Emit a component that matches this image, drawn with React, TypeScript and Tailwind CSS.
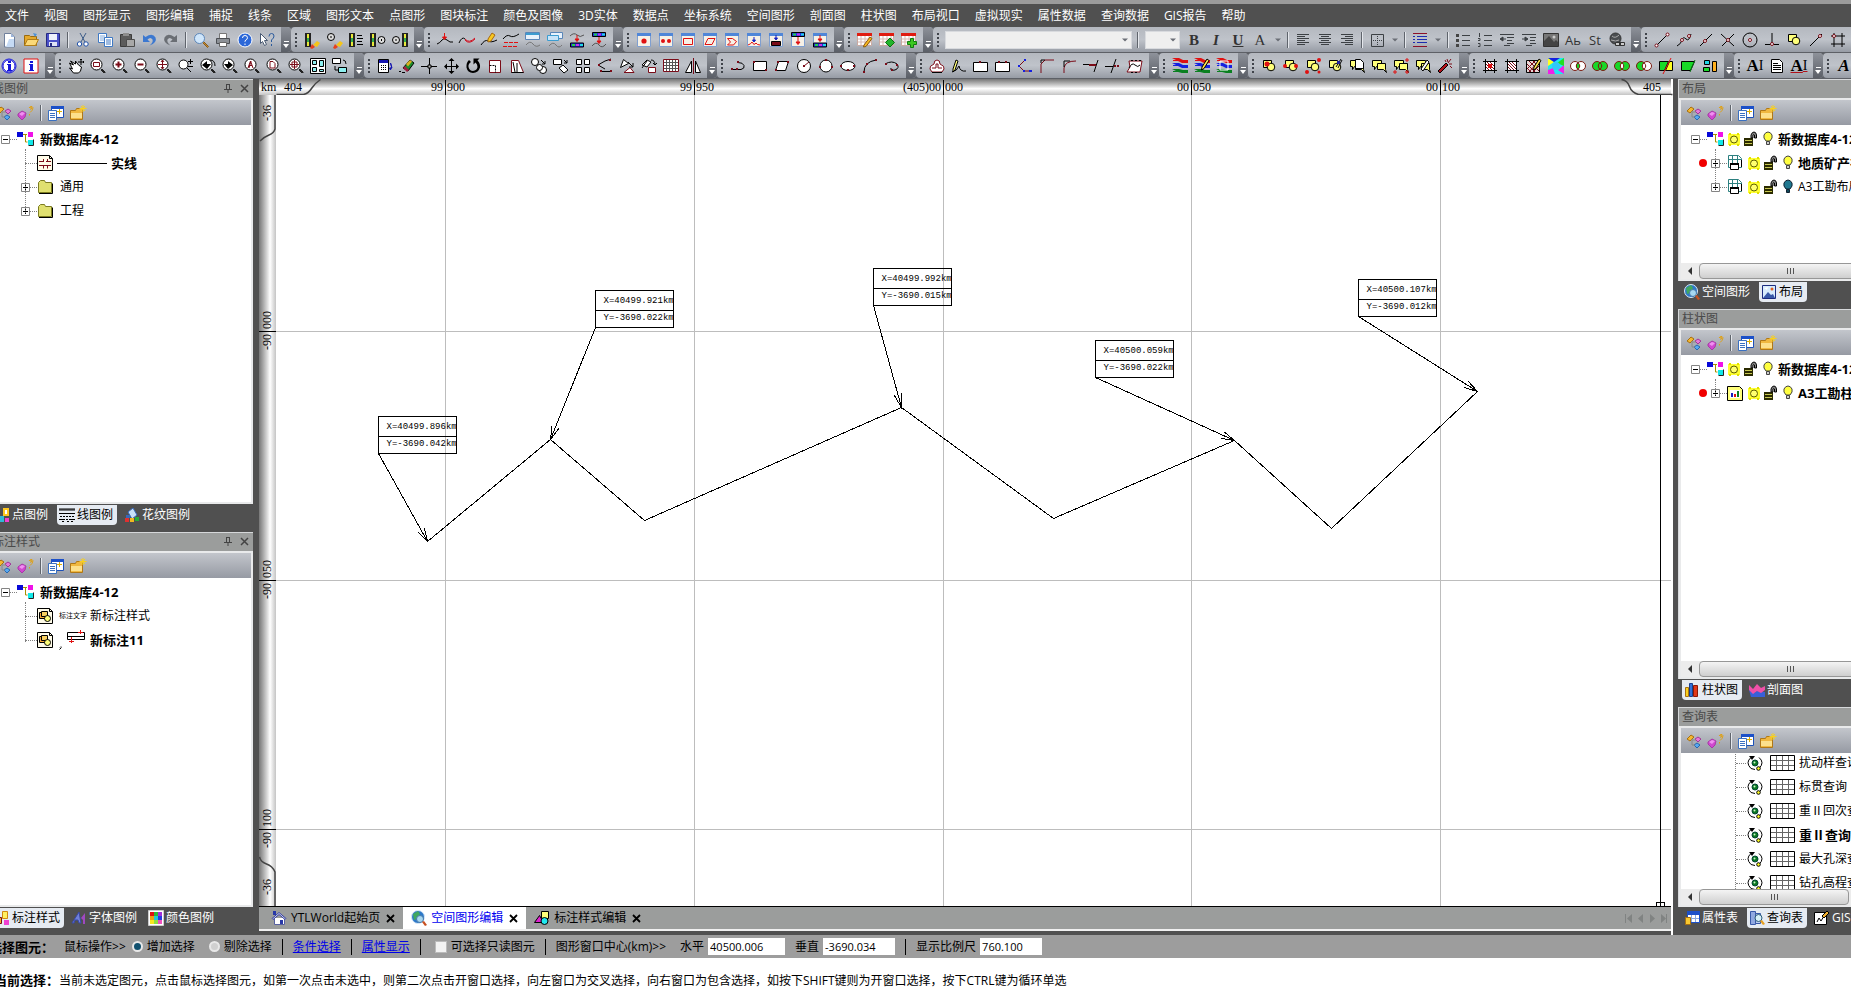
import React from 'react';
import { clsx } from 'clsx';

// fill, stroke, path
type Shape = [string, string, string];

const N = 'none';
const K = '#000';
const R = '#e01010';
const M = '#7a0c18';
const G = '#3c4044';
const Y = '#ffff7a';

const c = (x: number, y: number, r: number) => `M${x - r} ${y}a${r} ${r} 0 1 0 ${2 * r} 0a${r} ${r} 0 1 0 ${-2 * r} 0z`;
const b = (x: number, y: number, w: number, h: number) => `M${x} ${y}h${w}v${h}h${-w}z`;

const lens = (...inner: Shape[]): Shape[] => [
  [N, '#222', 'M11 11l4 4M12 11l3.5 3.5M11 12l3 3'],
  ['#fff', K, c(6.5, 6.5, 5.5)],
  ...inner,
];
const win = (...inner: Shape[]): Shape[] => [
  ['#f7f1e6', '#7f9fd0', b(1.5, 1.5, 13, 13)],
  ['#4f86d8', N, b(1, 1, 14, 3)],
  ...inner,
];
const sheet = (...inner: Shape[]): Shape[] => [
  ['#fff', '#c9a9a0', b(0.5, 2.5, 14, 11)],
  ['#e01c10', N, b(0, 1, 15, 3)],
  [N, '#d8b8b0', 'M4 4v9M8 4v9M12 4v9M1 7h14M1 10h14'],
  ...inner,
];
const column = (x: number): Shape[] => [
  ['#222', N, b(x, 1, 6, 14)],
  ['#e8e83a', N, b(x + 2, 2, 2, 12)],
  ['#35b04a', N, b(x + 2, 6, 2, 4)],
];
const brush = (x: number, y: number): Shape[] => [
  ['#f5c518', N, `M${x} ${y}l4-4 3 2-3 4z`],
  ['#e8401c', N, `M${x - 1} ${y - 1}l3 3-3 2-2-1z`],
];
const band = (y: number): Shape[] => [
  ['#2233dd', K, b(1.5, y, 13, 4)],
  ['#22d04c', N, b(3, y + 1, 3, 2)],
  ['#c832e8', N, b(7, y + 1, 3, 2)],
  ['#20d8e8', N, b(11, y + 1, 3, 2)],
];
const pencil: Shape[] = [['#ffe14a', K, 'M8 9l5-8 2 1.5-5 8-2.5 1.5z']];
const shapesPair: Shape[] = [
  [Y, K, b(2.5, 2.5, 8, 7)],
  [Y, K, c(10, 9, 3.8)],
];
const bubble: Shape[] = [
  [Y, K, 'M1.5 2.5h9v6h-5l-2 3v-3h-2z'],
  [Y, K, 'M6.5 5.5h8v6l1 3-3-3h-6z'],
];
const rainbow: Shape[] = [
  [R, N, 'M0 0h7l4 2h5v3h-6l-4-2h-5v-1h3z'],
  ['#1520e0', N, 'M0 5h7l4 2h5v3h-6l-4-2h-5v-1h3z'],
  ['#0a8020', N, 'M0 11h7l4 1h5v3h-6l-4-1h-5v-1h3z'],
];
const venn = (left: string, right: string, mid: string): Shape[] => [
  [left, '#7a1a10', c(5, 8, 4.5)],
  [right, '#7a1a10', c(11, 8, 4.5)],
  [mid, '#7a1a10', 'M8 4.7q3.5 3.3 0 6.6q-3.5-3.3 0-6.6z'],
];
const hatch: Shape[] = [
  ['#fff', K, b(3.5, 3.5, 9, 9)],
  [N, M, 'M4 9l4 4M4 6l7 7M5 4l8 8M8 4l5 5'],
  [N, K, 'M3.5 1v14M12.5 1v14M1 3.5h14M1 12.5h14'],
];
const page: Shape[] = [['#fffbe8', K, 'M.5 .5h12l3 3v12h-15z'], [N, K, 'M12.5 .5v3h3']];
const dots = (...pts: number[][]): Shape[] => pts.map(([x, y]) => ['#fff', M, c(x, y, 1.5)] as Shape);
const marks = (...pts: number[][]): Shape[] => pts.map(([x, y]) => [M, N, b(x - 1, y - 1, 2, 2)] as Shape);

const icons: Record<string, Shape[]> = {
  newDoc: [['#fff', '#70809c', 'M3.5 1.5h6.5l3.5 3.5v10h-10z'], ['#c5daf4', N, 'M8 7h5v8h-8z'], ['#9db6dc', N, 'M10 1.5v3.5h3.5z']],
  open: [['#e5a92c', '#9a6b10', 'M1.5 3.5h5l1 1h6v9h-12z'], ['#fbd978', '#b07d18', 'M4.5 7.5h11l-3 6h-11z'], ['#4a90d8', N, 'M10 1l4 1-2 3z']],
  save: [['#4a50c8', '#252a80', b(1.5, 1.5, 13, 13)], ['#eef1fb', N, b(4, 2, 8, 6)], ['#dfe3f5', N, b(4, 10, 8, 4)], ['#252a80', N, b(5, 11, 2, 3)]],
  cut: [[N, '#3c5c88', 'M5 1l5 9M11 1l-5 9'], ['#fff', '#1d4fa8', c(4.5, 12, 2.2)], ['#fff', '#1d4fa8', c(11, 12, 2.2)]],
  copy: [['#fff', '#3f79c4', b(1.5, 1.5, 8, 9)], [N, '#7fa8dc', 'M3 4h5M3 6h5M3 8h5'], ['#fff', '#3f79c4', b(7.5, 5.5, 8, 9)], [N, '#3f79c4', 'M9 8h5M9 10h5M9 12h5']],
  paste: [['#5c5c5c', '#3c3c3c', b(1.5, 2.5, 11, 12)], ['#8e8e8e', N, b(4, 1, 6, 3)], ['#a8a8a8', '#4c4c4c', b(7.5, 7.5, 8, 7)]],
  undo: [['#3c78d0', N, 'M2 3v7h7l-2.5-2.5q3-3 5 0q1 3-3 6q8-3 6-8q-3-5-10-.5z']],
  redo: [['#6a6e74', N, 'M14 3v7h-7l2.5-2.5q-3-3-5 0q-1 3 3 6q-8-3-6-8q3-5 10-.5z']],
  find: [['#c08a38', '#8a5c18', 'M9.5 10.5l1-1 5 5-1 1z'], ['#cfe6fb', '#5c86b8', c(6.5, 6.5, 5)]],
  print: [['#fff', '#777', b(4.5, 1.5, 7, 5)], ['#8c9096', '#4c4f54', b(1.5, 6.5, 13, 5)], ['#fff', '#666', b(4.5, 10.5, 7, 4)]],
  help: [['#2c68d8', '#fff', c(8, 8, 7)], [N, '#fff', 'M5.5 6q0-2.5 2.5-2.5t2.5 2.3q0 1.5-2.5 3v1M8 11.5v1.5']],
  whats: [['#fff', '#4a5a72', 'M1.5 1.5l7 7h-3l2 4-2 1-2-4-2 2z'], [N, '#2a5a9c', 'M10 4.5q0-3 2.5-3t2.5 2.5q0 2-2.5 4v2M12.5 12v2']],

  colBrush: [...column(1), ...brush(9, 13)],
  circBrush: [['#ddd', K, c(5, 5, 3.5)], [N, K, 'M5 4v2'], ...brush(10, 13)],
  colText: [...column(1), [N, K, 'M9 3.5h5M9 6.5h6M9 9.5h5M9 12.5h6']],
  colCirc: [...column(0), ['#ddd', K, c(11.5, 8, 3.5)], [N, K, 'M11.5 7v2']],
  circCol: [...column(10), ['#ddd', K, c(4, 8, 3.5)], [N, K, 'M4 7v2']],

  curveAdd: [[N, K, 'M0 12q3-1 5-4t5 0 6 2'], [R, R, 'M7.5 1v6M5.5 5l2 2.5 2-2.5z']],
  curveRed: [[N, K, 'M0 11q3-7 6-4'], [N, '#d01020', 'M6 7q4 5 10-1M6 8q4 5 10-1']],
  curvePen: [[N, K, 'M0 13q4-6 7-4t9-1'], ['#f8c820', '#a86810', 'M7 7l4-6 3 2-4 6-3 1z']],
  curveDash: [[N, K, 'M0 7q4-5 7-3t9-2'], [N, R, 'M1 10.5h4M6 10.5h4M11 10.5h4M0 14.5h4M5 14.5h4M10 14.5h4']],
  curveWin: [['#e8f2fc', '#5a86b8', b(0.5, 0.5, 14, 7)], ['#3c9cd0', N, b(1, 1, 13, 2)], [N, '#777', 'M1 13q4-5 7-1t7 1']],
  curveWin2: [['#e8f2fc', '#5a86b8', b(3.5, 0.5, 12, 6)], ['#c8e4f8', '#3c9cd0', b(0.5, 3.5, 11, 5)], [N, '#777', 'M2 14q4-5 7-1t6 0']],
  curveBand: [[N, '#555', 'M1 4q4-4 7-1t7 0'], ...band(11), [R, R, 'M8 3v6M6 7l2 2.5 2-2.5z']],
  bandCurve: [...band(0.5), [N, '#555', 'M1 14q4-5 7-1t7-1'], [R, R, 'M8 5v5M6 9l2 2.5 2-2.5z']],

  winDot: win([R, N, c(8, 9, 2.6)]),
  winDots: win([R, N, c(5, 9, 2)], [R, N, c(11, 9, 2)]),
  winRect: win([N, R, b(3.5, 6.5, 9, 6)]),
  winPara: win([N, R, 'M6 6.5h7l-3 6h-7z']),
  winPoly: win([N, R, 'M3.5 6.5h5l4 3-3 3.5h-6l3-3z']),
  winCurve: win(['#1520c0', '#1520c0', 'M8 5v4M6.5 8l1.5 2 1.5-2z'], [N, R, 'M2 13q3-1 4-3 2 4 4 1 1 2 4 2']),
  winStamp: win(['#1520c0', '#1520c0', 'M8 3v4M6.5 6l1.5 2 1.5-2z'], [M, K, b(3.5, 9.5, 9, 4)]),
  winBand: win(...band(0.5), [R, R, 'M8 5v6M6 10l2 2.5 2-2.5z']),
  winBand2: win(...band(11), [R, R, 'M8 3v5M6 7l2 2.5 2-2.5z']),

  sheetPen: sheet(['#f8b820', '#8a5a10', 'M7 13l6-8 2 1.5-6 8-2.5.5z']),
  sheetGem: sheet(['#22b42c', '#0a7014', 'M11 6l4.5 4.5-4.5 4.5-4.5-4.5z']),
  sheetAdd: sheet(['#3cc820', '#0f7c10', 'M9.5 6.5h3v3h3v3h-3v3h-3v-3h-3v-3h3z']),

  left: [[N, G, 'M2 2.5h12M2 4.5h8M2 6.5h12M2 8.5h8M2 10.5h12M2 12.5h8']],
  center: [[N, G, 'M2 2.5h12M4 4.5h8M2 6.5h12M4 8.5h8M2 10.5h12M4 12.5h8']],
  right: [[N, G, 'M2 2.5h12M6 4.5h8M2 6.5h12M6 8.5h8M2 10.5h12M6 12.5h8']],
  border: [[N, G, b(2.5, 2.5, 12, 12)], [N, G, 'M8.5 4v1M8.5 6v1M8.5 8v1M8.5 10v1M8.5 12v1M4 8.5h1M6 8.5h1M10 8.5h1M12 8.5h1']],
  spacing: [[N, '#8c1028', 'M1 1.5h14M1 14.5h14'], [N, '#1c2cb0', 'M5 4.5h10M5 7.5h10M5 10.5h10M1 4.5h2M1 7.5h2M1 10.5h2']],
  bullets: [['#444', N, b(1, 2, 3, 3) + b(1, 7, 3, 3) + b(1, 12, 3, 3)], [N, G, 'M7 3.5h8M7 8.5h8M7 13.5h8']],
  numbers: [[N, G, 'M2.5 1v4M1 6.5h2v2h-2M1 11.5h2v3h-2M7 3.5h8M7 8.5h8M7 13.5h8']],
  outdent: [[N, G, 'M1 2.5h14M8 5.5h7M8 8.5h5M8 11.5h7M5 13.5h6'], [G, G, 'M7 7h-5M4 5l-3 2 3 2z']],
  indent: [[N, G, 'M1 2.5h14M9 5.5h6M9 8.5h5M9 11.5h6M5 13.5h6'], [G, G, 'M1 7h5M4 5l3 2-3 2z']],
  image: [['#777', '#333', b(0.5, 1.5, 15, 13)], ['#444', N, 'M1 14v-5l5-5 5 6 2-2 2 2v4z'], ['#ccc', N, c(11, 5, 1.5)]],
  world: [['#4a4d50', '#333', c(6.5, 6.5, 5.5)], [N, '#aaa', 'M3 4q3 3 7-1M2 8q5 2 8 0'], ['#ccc', '#333', b(6.5, 10.5, 5, 3) + b(10.5, 10.5, 5, 3)]],

  snapLine: [[N, K, 'M3 13L13 3'], ...dots([2.5, 13.5], [13.5, 2.5])],
  snapCurve: [[N, K, 'M1 14q4-2 5-6t4-1 5-5'], ...dots([6, 8], [13, 4])],
  snapMid: [[N, K, 'M2 14L14 2'], ...dots([7, 9])],
  snapCross: [[N, K, 'M1 2l13 12M14 2L2 14'], ...dots([8, 8])],
  snapCircle: [[N, K, c(8, 8, 7)], ...dots([8, 8])],
  snapPerp: [[N, K, 'M8 1v11M1 12.5h14'], ...dots([8, 12])],
  snapShape: shapesPair,
  snapNear: [[N, K, 'M2 14L14 2'], ...dots([12, 4])],
  snapGrid: [[N, K, 'M4 1v14M12 1v14M1 4h14M1 12h14'], ...dots([4, 4])],

  infoBlue: [['#fff', '#1414d8', c(8, 8, 7)], [N, '#1414d8', c(8, 8, 6)], ['#1414d8', N, 'M6 6h4v6h1v1h-5v-1h1v-5h-1zM7 3h3v2h-3z']],
  infoRed: [['#fff', R, b(1, 1, 14, 14)], ['#1414d8', N, 'M6 6h4v6h1v1h-5v-1h1v-5h-1zM7 3h3v2h-3z']],
  hand: [['#fff', K, 'M1.5 5l4 2-3-4 5 3 0-3 3 4 3 2-1 4-2 2h-5l-4-5 3 1z'], [N, K, 'M13 1v6M10 4h6M12 2l1-1 1 1M15 3l1 1-1 1']],
  zRect: lens([N, M, b(3.5, 4.5, 6, 4)]),
  zIn: lens([M, N, 'M5.5 3.5h2v2h2v2h-2v2h-2v-2h-2v-2h2z']),
  zOut: lens([M, N, b(3.5, 5.5, 6, 2)]),
  zAll: lens([N, M, 'M6.5 2v9M2 6.5h9M5 4l1.5-2 1.5 2M5 9l1.5 2 1.5-2']),
  zScale: [['#fff', K, c(5.5, 6.5, 4.5)], [N, K, 'M9 10l4 4M12.5 1v5M10 3.5h5M10 8.5h5']],
  zPrev: lens([K, N, 'M2 7l5-4v3h4l-4 5z'], [N, K, 'M10 2q5 0 5 6']),
  zNext: lens([K, N, 'M11 7l-5-4v3h-4l4 5z']),
  zA: lens([N, M, 'M4 10l2.5-7 2.5 7M5 7.5h3'], [N, M, 'M5 10l2-7']),
  zPage: lens([N, M, 'M4 3.5h3l2 2v4.5h-5z']),
  zPan: lens([N, M, 'M6.5 2v9M2 6.5h9M4 4h5v5h-5z']),
  tiles: [['#fff', K, b(0.5, 0.5, 15, 15)], ['#8ef0f0', K, b(2.5, 2.5, 4, 4) + b(9.5, 2.5, 4, 6)], ['#8ef0f0', K, b(2.5, 9.5, 4, 4) + b(9.5, 11.5, 4, 2)]],
  tileNext: [['#fff', K, b(0.5, 0.5, 8, 5)], ['#8ef0f0', K, b(6.5, 9.5, 8, 5)], [N, K, 'M11 2q3 0 3 4M3 8v4h3']],

  calc: [['#fff', K, b(1.5, 1.5, 10, 13)], ['#1414b0', N, b(2, 2, 9, 3)], [N, K, 'M4 7.5h1M6 7.5h1M8 7.5h1M4 9.5h1M6 9.5h1M8 9.5h1M4 11.5h1M6 11.5h1M8 11.5h1'], ['#1414b0', '#1414b0', 'M13.5 5q2 4 0 7l-1-2h2.5z']],
  erase: [['#1c8c2c', K, 'M4 10l7-8 4 3-6 8z'], ['#d8b020', N, 'M7 6l4-4 2 1.5-4 5z'], ['#a02040', N, 'M4 10l2-2 4 4-2 2z'], [N, K, 'M0 13.5h2M3 14.5h3']],
  cross: [[N, K, 'M8.5 0v16M0 8.5h16'], ['#bbb', K, b(7, 7, 3, 3)]],
  move: [[N, K, 'M8.5 1v14M2 8.5h13'], [K, N, 'M8.5 0l3 3h-6zM8.5 16l3-3h-6zM1 8.5l3-3v6zM16 8.5l-3-3v6z']],
  rotate: [[K, N, 'M4 2l2 2q-3 2-2.500 5 1 4 4.500 4 4-.5 4.500-4 0-3-2-4.500l-2 2v-6h6l-2 2q3 3 2.500 7-1.500 5-7 5.500-5.500-.5-6.500-5.500-.5-5 2.500-7.500z']],
  scale: [['#fff', M, b(2.5, 2.5, 11, 12)], [N, K, 'M2.5 7.5h2M5.5 7.5h2M8.5 7.5v2M8.5 10.5v2M8.5 13.5v1']],
  skew: [['#fff', M, 'M2.5 2.5h7l5 12h-12z'], [N, K, 'M4 4l2 10M2.5 14.5h12M8 5v9']],
  copyCirc: [['#fff', K, c(4, 4, 3.5)], ['#fff', K, c(12, 12, 3.5)], ['#fff', K, c(8.5, 9.5, 3)], [N, K, 'M10 2l4 4M14 3v3h-3']],
  copySq: [['#fff', K, b(0.5, 1.5, 8, 5)], ['#fff', K, 'M6 10l4-3 5 5-4 3z'], [N, K, 'M11 2l3 3M14 2v3h-3']],
  array: [['#fff', K, b(1.5, 1.5, 5, 5) + b(9.5, 1.5, 5, 5) + b(1.5, 9.5, 5, 5) + b(9.5, 9.5, 5, 5)]],
  align1: [[N, K, 'M1 7l7-4 6-2M1 7l7 4M4 13.5h10'], ...marks([2, 7], [13, 2], [4, 13], [14, 13])],
  align2: [['#fff', K, 'M1.5 9.5l3-8 5 4z'], ['#fff', M, 'M5 14.5h10l-4-5z'], [N, K, 'M9 4l5 5M14 5v4h-4']],
  align3: [['#fff', K, 'M1 7l5-5 4 2-4 5z'], ['#fff', M, b(7.5, 9.5, 7, 5)], [N, K, 'M10 2q4 0 4 5M12 5l2 2 2-2M1 10l5-7']],
  grid: [['#fff', M, b(0.5, 1.5, 15, 12)], [N, '#555', 'M3.5 2v11M6.5 2v11M9.5 2v11M12.5 2v11M1 4.5h14M1 7.5h14M1 10.5h14']],
  mirror: [['#fff', K, 'M6.5 3v11.5h-6z'], ['#fff', K, 'M10.5 3v11.5h5z'], [N, M, 'M8.5 0v16']],

  pline: [[N, K, 'M1 11.5h10q4-1 3-4-1-3-6-3'], ...marks([2, 11], [7, 11], [8, 4])],
  rect: [['#fff', K, b(1.5, 3.5, 13, 9)], ...marks([2, 4], [14, 12])],
  para: [['#fff', K, 'M4.5 3.5h10l-3 9h-10z'], ...marks([4, 4], [14, 4], [2, 12])],
  circ: [['#fff', K, c(8, 8, 6.5)], [N, M, 'M8 8l5-4'], ...marks([8, 8])],
  circ3: [['#fff', K, c(8, 8, 6)], ...marks([8, 2], [2, 9], [14, 9])],
  ellipse: [['#fff', K, 'M1 8a7 4.5 0 1 0 14 0a7 4.5 0 1 0-14 0z'], ...marks([1, 8], [14, 8], [8, 12])],
  arc: [[N, K, 'M2 14q0-10 12-12'], ...marks([2, 14], [14, 2], [5, 6])],
  spiral: [[N, K, 'M1 6q7-4 12 0 3 4-2 6-5 1-4-2'], ...marks([2, 6], [13, 7], [8, 12])],

  stamp: [['#fff', M, 'M5 6q0-4 3-4t3 4q5 2 4 5l-2 3h-10l-2-3q-1-3 4-5z'], [N, M, 'M3 10h4v-4h2v4h4'], [N, K, 'M3 14.5h10']],
  penCurve: [[Y, K, 'M2 11l3-9 2 1-3 9-2 2z'], [N, K, 'M1 14q5-1 7-6 1 6 7 5']],
  node: [['#fff', K, b(0.5, 4.5, 14, 9)], ...marks([7, 4])],
  nodes: [['#fff', K, b(0.5, 4.5, 14, 9)], ...marks([4, 4], [11, 4])],
  nodeBlue: [[N, M, 'M8 2L2 8l5 5h6'], ['#1520e0', N, b(7, 1, 2, 2) + b(1, 7, 2, 2) + b(6, 12, 2, 2) + b(12, 12, 3, 2)]],
  chamfer: [[N, M, 'M2 15v-9l4-4h9'], [N, K, 'M2 5v-3h4']],
  fillet: [[N, M, 'M3 15v-5q1-7 12-7'], [N, K, 'M3 9v-6h6']],
  extend: [[N, K, 'M0 6.5h6M15 2l-4 12'], [N, M, 'M6 6.5h7M6 7.5h7']],
  trim: [[N, K, 'M0 8.5h8M11 1L6 15'], [N, M, 'M9 8.5h2M12 8.5h2M9 7.5h2M12 7.5h2']],
  region: [['#fff', M, 'M2 3h13l-2 11h-13l3-5z'], [N, K, 'M2 10q3-6 6-3t5 0M4 14.5h2M8 14.5h2M4 2.5h2M8 2.5h2M12 2.5h2']],

  rb1: rainbow,
  rb2: [...rainbow, ...pencil],
  rb3: [...rainbow, [N, '#fff', b(4, 3, 8, 9)]],

  or1: [...shapesPair, [R, N, c(6, 6, 2.5)]],
  or2: [...shapesPair, [R, N, c(2, 8, 2) + c(13, 8, 2)]],
  or3: [...shapesPair, [R, N, c(2, 14, 2) + c(14, 2, 2) + c(14, 14, 1.5)]],
  or4: [...shapesPair, [N, K, 'M9 9l5-8M11 10l4-8'], ['#2020a0', N, b(10, 3, 3, 3)]],
  bub1: [...bubble, ['#fff', K, 'M6.5 1.5h5l3 3v6h-8z']],
  bub2: bubble,
  bub4: [...bubble, [N, R, 'M2 12v4M0 14h4M14 0v4M12 2h4M14 12v4M12 14h4']],
  bub5: [...bubble, ['#fff', K, 'M6 11l6-9 2 2-6 9z']],
  wand: [['#b01018', K, 'M1 13l8-8 2 2-8 8z'], [N, M, 'M10 1l1 3M14 1l-3 4M15 6h-3M13 8l2 2M8 2l1 2']],

  ht1: [...hatch, [R, N, b(6, 6, 4, 4)]],
  ht2: hatch,
  ht3: [['#e8d8d8', K, b(0.5, 2.5, 13, 12)], [N, M, 'M1 6l8 8M1 10l4 4M3 3l10 10M7 3l6 6M9 3l-8 8M13 3L3 14M13 8l-6 6'], ...pencil],
  prism: [['#20e8f0', N, b(0, 0, 16, 16)], ['#ffff20', N, 'M0 0l6 4-6 4z'], ['#f020e8', N, 'M16 16l-6-4 6-5z'], ['#20e020', N, 'M16 0l-7 5 7 3z'], ['#1520e0', N, 'M0 0h12l-6 4z'], ['#f020e8', N, 'M0 16v-4l5-2 2 6z'], ['#30c8f8', N, c(8, 8, 4)]],
  v1: venn('#fff', '#fff', '#18d828'),
  v2: venn('#18d828', '#18d828', '#18d828'),
  v3: venn('#18d828', '#18d828', '#fff'),
  v4: venn('#18d828', '#fff', '#fff'),
  split: [['#18d828', K, 'M1.5 3.5h9l-4 9h-5z'], ['#ffff20', K, 'M11.5 3.5h3v9h-7z'], [N, R, 'M13 0L5 16']],
  quad: [['#18d828', K, 'M1.5 3.5h13l-4 9h-9z'], [N, '#0a7014', 'M15 2l-5 12']],
  blocks: [['#20d8e8', K, b(2.5, 2.5, 5, 4)], ['#18d828', K, b(1.5, 9.5, 6, 4)], ['#ffb020', K, b(10.5, 3.5, 4, 10)]],

  docText: [['#fff', K, 'M2.5 1.5h8l3 3v10h-11z'], [N, K, 'M4 5.5h5M4 7.5h8M4 9.5h8M4 11.5h8']],

  treeQ: [['#f4b830', '#a87010', 'M1 6l4-4 3 2-4 4z'], ['#e878d8', '#a03898', 'M9 6l3-2 3 2-3 3z'], ['#58a8f0', '#2868b0', 'M8 12l3-2 3 2-3 3z'], [N, '#888', 'M6 6v6h3M6 7h4']],
  gem: [['#d048d0', '#a838a8', 'M0 9l4-3 4 2-1 4-3 3-4-4z'], ['#f090f0', N, 'M1 9l3-2 3 1-3 3z'], [N, '#e0a010', 'M11 3q1-2 3-1.5t0 4l-2 2M11.5 9v1.5M12 3q1-1 2 0M12 4.500q1-1 2-1']],
  winAdd: [['#fff', '#1c50b8', b(3.5, 1.5, 12, 11)], ['#1c50c8', N, b(3, 1, 13, 3)], ['#fff', '#3a70c0', b(0.5, 5.5, 8, 10)], [N, '#3a70c0', 'M2 8.5h5M2 10.5h5M2 12.5h5'], [N, '#e0b000', 'M11.5 4v5M9 6.5h5']],
  folderNew: [['#f0b840', '#b07818', 'M.5 5.5h5l1-2h6v11h-12z'], ['#fce08c', N, b(1, 8, 11, 5)], [N, '#f8d020', 'M13 0v7M9.5 3.5h7M11 1l4 5M15 1l-4 5']],

  db: [['#0808d8', N, b(0, 1, 6, 5)], ['#f010e8', N, b(11, 1, 5, 5)], ['#10e8e8', N, b(11, 9, 5, 5)], [N, '#a89000', 'M6 3.5h4M8.5 4v7h2'], [N, '#222', 'M11.5 14.5h5v-6']],
  lineDoc: [...page, [N, M, 'M2 6.5h4M9 6.5h5M2 10.5h12M6.5 4v3M10.5 4v3M6.5 10.5v3M10.5 10.5v3']],
  folder: [['#e0e070', '#7c7c20', 'M1.5 3.5l2-2h4l1 2h6v10h-13z'], [N, K, 'M2 14.5h13.5v-10']],
  markDoc: [...page, ['#f8a838', K, b(2.5, 4.5, 6, 6)], ['#f8d060', K, b(4.5, 3.5, 6, 5)], [Y, K, c(10.5, 10.5, 3)]],
  layout: [['#fff', '#2c8080', 'M1.5 .5h10l3 3v9h-13z'], [N, '#2c8080', 'M5.5 1v12M2 4.5h12M10.5 1v10'], ['#fff', K, b(3.5, 8.5, 8, 6)], [K, N, b(3, 8, 9, 2)], [N, K, 'M14.5 5v7']],
  chartDoc: [[Y, K, 'M.5 1.5h12l3 3v11h-15z'], ['#fff', N, b(3, 5, 10, 8)], ['#1520c0', N, b(4, 8, 2, 4)], [R, N, b(7, 9, 2, 3)], ['#0a8020', N, b(10, 6, 2, 6)]],
  sun: [['#ffff30', N, b(2, 3, 12, 11)], ['#ffff70', '#5c5c00', c(8, 8.5, 3.5)], ['#e0e000', N, b(3, 2, 2, 2) + b(11, 2, 2, 2) + b(3, 13, 2, 2) + b(11, 13, 2, 2)]],
  lock: [['#2a2a00', N, b(1, 7, 9, 8)], [N, '#c8c850', 'M2 9.5h7M2 12.5h7'], ['#888', K, 'M8 7v-3q1-3 3-3t2.5 3v3h-2v-3q-.5-1-1.500 0v3z']],
  bulb: [['#ffff40', '#444', 'M6 10q-3-3-2-6 1.5-3 4-3t4 3q1 3-2 6z'], ['#ccc', '#444', b(6.5, 10.5, 3, 3)]],
  bulbOff: [['#207890', '#123', 'M6 10q-3-3-2-6 1.5-3 4-3t4 3q1 3-2 6z'], ['#104858', '#123', b(6.5, 10.5, 3, 3)]],
  eye: [['#fff', N, 'M2 8a6 6 0 1 0 12 0a6 6 0 1 0-12 0z'], [N, K, 'M4 2.5q-6 5 0 11M12 2.500q6 5 0 11M4 13.500l4 1'], ['#0a7820', '#043', c(8, 8, 3)], [K, N, 'M2 1h6l-3 4z'], ['#ffff20', K, c(11.5, 13.5, 1.8)], ['#c8f8c8', N, c(7.5, 7.5, 1)]],

  tPoint: [['#30b8d8', N, b(4, 9, 6, 6)], ['#ffc820', N, b(9, 1, 6, 8)], ['#fff', N, b(11, 3, 2, 4)], ['#f040d0', N, b(11, 11, 4, 4)]],
  tLine: [[N, K, 'M0 2h16M0 3h16M0 6.5h16M1 9.5h2M4 9.5h2M7 9.5h2M10 9.5h2M13 9.5h2M0 12.5h6M10 12.5h6M7 12.5h2M3 14.5h2M8 14.5h2M12 14.5h2']],
  tPattern: [['#c8e0f8', '#3868b8', 'M4 5l5-4 4 7-5 4z'], ['#3868b8', N, b(2, 8, 4, 3)], ['#e03030', N, b(1, 11, 4, 4)], ['#f0b820', N, b(6, 11, 4, 4)], ['#28a838', N, b(11, 10, 4, 4)]],
  tMark: [['#f8b020', M, b(1.5, 7.5, 6, 6)], ['#fff060', '#d08810', b(8.5, 1.5, 5, 7)], ['#f040d0', N, b(10, 10, 5, 5)]],
  tFont: [['#7080d8', '#3848a8', 'M1 13l7-11 2 11h-2l-1-3h-3l-1 3z'], ['#a048c0', N, 'M10 8l4-5v11h-2v-4z']],
  tColor: [['#fff', '#ccc', b(0.5, 0.5, 15, 15)], [R, N, b(2, 2, 4, 4)], ['#f0a010', N, b(2, 6, 4, 4)], ['#f8e820', N, b(2, 10, 4, 4)], ['#28b838', N, b(6, 2, 4, 4)], ['#20c8d8', N, b(6, 6, 4, 4)], ['#90e040', N, b(6, 10, 4, 4)], ['#a030d8', N, b(10, 2, 4, 4)], ['#2838e0', N, b(10, 6, 4, 4)], ['#f050c0', N, b(10, 10, 4, 4)]],
  tGlobe: [['#2c78c8', '#d8e8f8', c(7, 7, 6.5)], ['#40a860', N, 'M2 4l5-3 2 3-3 5-3 1z'], ['#a8d8f0', '#4878a8', c(9, 9, 3.5)], ['#c85020', N, 'M11 12l2-1 3 4-2 1z']],
  tImage: [['#d8ecfc', '#1c2c80', b(1.5, 1.5, 13, 13)], ['#3858a8', N, 'M2 14l5-6 3 3 2-1 2 4z'], ['#e06020', N, c(11, 5, 1.5)], ['#fff', N, 'M3 4l4-1-1 3z']],
  tBars: [['#f8d020', '#a87010', b(1.5, 5.5, 3, 9)], ['#3070d8', '#18408c', b(5.5, 1.5, 3, 13)], ['#e03818', '#8c1808', b(9.5, 3.5, 4, 11)]],
  tArea: [['#3860d8', N, 'M0 8l5 3 3-2 8 1v5h-14z'], ['#f050a8', N, 'M0 3l4 4 4-5 4 4 4-2v4l-4 3-4-2-4 3-4-4z']],
  tTable: [['#fff', '#1c50c8', b(3.5, 1.5, 12, 11)], ['#1c50c8', N, b(3, 1, 13, 4)], [N, '#88a8e0', 'M7.5 5v7M11.5 5v7M4 8.5h11'], ['#f8c830', '#a87010', b(1.5, 7.5, 5, 7)]],
  tQuery: [['#90a8e0', '#3858a8', b(1.5, 1.5, 5, 13)], ['#c0d0f0', '#3858a8', b(6.5, 3.5, 5, 10)], ['#d8f0f8', '#285878', c(9.5, 8, 3.5)], ['#e8a020', N, 'M11 11l2-1 3 4-2 1z']],
  tReport: [['#fff', K, b(0.5, 2.5, 12, 12)], [N, K, 'M3 12l2-4 2 3 3-5'], ['#f0b030', K, 'M8 6l5-5 2 2-5 5z']],
  tHome: [['#fff', '#5860a0', 'M3.5 8v6.5h10v-6.5'], ['#d0d8f0', '#3840a0', 'M1 8.5l7-6 7 6-1 1-6-5-6 5z'], ['#2838a8', N, b(9, 10, 3, 4)], ['#2838a8', N, b(2, 1, 3, 4)]],
  tEdit: [['#e020d0', K, 'M.5 12.5l5-7 4 7z'], [Y, K, b(7.5, 1.5, 7, 7)], ['#20e8f0', K, c(10.5, 11, 3.5)]],
};

const Glyph = ({ name, className = 'h-4 w-4' }: { name: string; className?: string }) => (
  <svg viewBox="0 0 16 16" className={clsx('shrink-0 overflow-visible', className)} aria-hidden="true">
    {(icons[name] || []).map(([fill, stroke, d], i) => (
      <path key={i} d={d} fill={fill} stroke={stroke} />
    ))}
  </svg>
);

const menus = [
  '文件', '视图', '图形显示', '图形编辑', '捕捉', '线条', '区域', '图形文本', '点图形', '图块标注', '颜色及图像', '3D实体',
  '数据点', '坐标系统', '空间图形', '剖面图', '柱状图', '布局视口', '虚拟现实', '属性数据', '查询数据', 'GIS报告', '帮助',
];

const Divider = () => (
  <span className="flex w-2 shrink-0 justify-center">
    <span className="h-4 w-px bg-[#5f646c]" />
    <span className="h-4 w-px bg-[#e4e7ec]" />
  </span>
);

const Tool = ({ name }: { name: string }) => (
  <button type="button" aria-label={name} className="flex h-full w-[22px] shrink-0 items-center justify-center">
    <Glyph name={name} />
  </button>
);

const DropArrow = () => (
  <button type="button" aria-label="drop" className="flex w-[13px] shrink-0 justify-center">
    <svg viewBox="0 0 8 4" className="h-1 w-1.5"><path d="M0 0h8l-4 4z" fill="#6a6e76" /></svg>
  </button>
);

const ToolGroup = ({ items, grip = true, children }: { items?: string[]; grip?: boolean; children?: React.ReactNode }) => (
  <div className="flex h-[25px] shrink-0 items-center rounded-sm bg-linear-to-b from-[#b4b8bf] via-[#bfc3ca] to-[#979ca5]">
    {grip && (
      <span className="flex w-[10px] shrink-0 flex-col items-center gap-0.5">
        {[0, 1, 2, 3].map((i) => <span key={i} className="h-0.5 w-0.5 bg-[#3f434a]" />)}
      </span>
    )}
    {items?.map((item, i) => (item === '|' ? <Divider key={i} /> : <Tool key={i} name={item} />))}
    {children}
    <span className="flex h-full w-[13px] shrink-0 justify-end">
      <button type="button" aria-label="more" className="flex h-full w-[10px] items-end justify-center rounded-r-sm bg-linear-to-b from-[#8e929a] to-[#5b5f67] pb-1">
        <svg viewBox="0 0 6 7" className="h-[7px] w-1.5"><path d="M1 0h5v1h-5zM0 3h6l-3 4z" fill="#fff" /></svg>
      </button>
    </span>
  </div>
);

const letterTool = 'flex w-[22px] shrink-0 items-center justify-center font-["Liberation_Serif",serif] text-[15px] leading-4 text-[#333]';
const bigA = 'flex w-[22px] shrink-0 items-center justify-center font-["Liberation_Serif",serif] text-[17px] leading-4 font-bold text-black';

const FormatGroup = () => (
  <ToolGroup>
    <span className="pl-0.5" />
    <select aria-label="font" className="h-[18px] w-[187px] shrink-0 appearance-none border border-[#d8dade] bg-[#efefef]" />
    <span className="pointer-events-none -ml-3.5"><DropArrow /></span>
    <span className="flex w-3.5 justify-center"><Divider /></span>
    <select aria-label="size" className="h-[18px] w-[35px] shrink-0 appearance-none border border-[#d8dade] bg-[#efefef]" />
    <span className="pointer-events-none -ml-3.5 mr-1"><DropArrow /></span>
    <button type="button" className={clsx(letterTool, 'font-bold')}>B</button>
    <button type="button" className={clsx(letterTool, 'font-bold italic')}>I</button>
    <button type="button" className={clsx(letterTool, 'font-bold underline')}>U</button>
    <button type="button" className={letterTool}>A</button>
    <DropArrow />
    <Divider />
    <Tool name="left" /><Tool name="center" /><Tool name="right" />
    <Divider />
    <Tool name="border" /><DropArrow />
    <Divider />
    <Tool name="spacing" /><DropArrow />
    <Divider />
    <Tool name="bullets" /><Tool name="numbers" /><Tool name="outdent" /><Tool name="indent" /><Tool name="image" />
    <button type="button" className="w-[22px] shrink-0 text-[13px] leading-4 text-[#333]">Aь</button>
    <button type="button" className="w-[22px] shrink-0 text-[13px] leading-4 text-[#333]">St</button>
    <Tool name="world" />
  </ToolGroup>
);

const PanelTabs = ({ tabs }: { tabs: { icon: string; label: string; active?: boolean }[] }) => (
  <div className="flex h-7 shrink-0 items-start gap-[5px] bg-[#505050] pt-px pl-1">
    {tabs.map((t) => (
      <button
        key={t.label}
        type="button"
        className={clsx(
          'flex h-5 shrink-0 items-center gap-0.5 rounded-b-sm pr-1 pl-0.5 whitespace-nowrap',
          t.active ? 'bg-[#e6ebf2] text-black' : 'text-white',
        )}
      >
        <Glyph name={t.icon} />
        {t.label}
      </button>
    ))}
  </div>
);

const Scroll = ({ thumb }: { thumb: string }) => (
  <div className="flex h-4 shrink-0 bg-[#ececec]">
    <button type="button" aria-label="scroll left" className="flex w-[18px] shrink-0 items-center justify-center">
      <svg viewBox="0 0 4 8" className="h-2 w-1"><path d="M4 0v8l-4-4z" fill="#333" /></svg>
    </button>
    <div className={clsx('flex items-center justify-center gap-0.5 rounded-sm border border-[#979797] bg-linear-to-b from-[#f4f4f4] to-[#cfcfcf]', thumb)}>
      {[0, 1, 2].map((i) => <span key={i} className="h-1.5 w-px bg-[#555]" />)}
    </div>
  </div>
);

interface PanelProps {
  title: string;
  grow: string;
  tabs: { icon: string; label: string; active?: boolean }[];
  scroll?: string;
  children: React.ReactNode;
}

const Panel = ({ title, grow, tabs, scroll, children }: PanelProps) => (
  <section className={clsx('flex min-h-0 flex-col', grow)}>
    <div className="flex min-h-0 flex-1 flex-col border-t border-l border-[#d6d8da] bg-[#9b9d9c]">
      <header className="flex h-[18px] shrink-0 items-center gap-2 pr-1 pb-px pl-[3px] text-[#4a4a4a]">
        <h2 className="flex-1">{title}</h2>
        <button type="button" aria-label="pin">
          <svg viewBox="0 0 8 9" className="h-[9px] w-2" fill="none" stroke="#444"><path d="M2.5 0v5M5.5 0v5M2 .5h4M0 5.5h8M4 6v3M5.5 1v4" /></svg>
        </button>
        <button type="button" aria-label="close">
          <svg viewBox="0 0 9 9" className="h-[9px] w-[9px]" fill="none" stroke="#444" strokeWidth="1.5"><path d="M1 1l7 7M8 1l-7 7" /></svg>
        </button>
      </header>
      <div className="flex min-h-0 flex-1 flex-col border-2 border-[#e9eaeb]">
        <div className="flex h-[25px] shrink-0 items-center bg-linear-to-b from-[#c3c6cc] to-[#969aa3] pl-0.5">
          <Tool name="treeQ" /><Tool name="gem" />
          <Divider />
          <Tool name="winAdd" /><Tool name="folderNew" />
        </div>
        <div className="relative min-h-0 flex-1 overflow-hidden bg-white">{children}</div>
        {scroll && <Scroll thumb={scroll} />}
      </div>
    </div>
    <PanelTabs tabs={tabs} />
  </section>
);

const Toggle = ({ open }: { open?: boolean }) => (
  <button type="button" aria-label="toggle" className="flex shrink-0">
    <svg viewBox="0 0 9 9" className="h-[9px] w-[9px]" fill="#fff" stroke="#848484">
      <path d="M.5 .5h8v8h-8z" />
      <path d={open ? 'M2 4.5h5' : 'M2 4.5h5M4.5 2v5'} stroke="#000" />
    </svg>
  </button>
);

const Guide = ({ className }: { className: string }) => <span className={clsx('shrink-0 border-t border-dotted border-[#808080]', className)} />;

const States = ({ off }: { off?: boolean }) => (
  <span className="ml-[3px] flex shrink-0 gap-px">
    <Glyph name="sun" /><Glyph name="lock" /><Glyph name={off ? 'bulbOff' : 'bulb'} />
  </span>
);

const RootRow = ({ states }: { states?: boolean }) => (
  <div className="flex h-6 items-center pl-[10px] text-[13px] font-bold whitespace-nowrap">
    <Toggle open />
    <Guide className="w-[7px]" />
    <Glyph name="db" />
    {states && <States />}
    <span className={states ? 'ml-0.5' : 'ml-[7px]'}>新数据库4-12</span>
  </div>
);

interface ChildRowProps {
  icon: string;
  label: string;
  bold?: boolean;
  leaf?: boolean;
  current?: boolean;
  states?: 'on' | 'off';
  sample?: React.ReactNode;
}

const ChildRow = ({ icon, label, bold, leaf, current, states, sample }: ChildRowProps) => (
  <div className={clsx('flex h-6 items-center pl-[18px] whitespace-nowrap', bold && 'text-[13px] font-bold')}>
    <span className={clsx('mr-1 h-2 w-2 shrink-0 rounded-full', current && 'bg-[#f00000]')} />
    {leaf ? <Guide className="ml-1 w-3" /> : <><Toggle /><Guide className="w-[7px]" /></>}
    <Glyph name={icon} />
    {states && <States off={states === 'off'} />}
    {sample}
    <span className={clsx(states ? 'ml-0.5' : sample ? 'ml-1' : 'ml-[7px]')}>{label}</span>
  </div>
);

const Branch = ({ className }: { className: string }) => (
  <span className={clsx('absolute top-6 left-[34px] border-l border-dotted border-[#808080]', className)} />
);

const queries = ['扰动样查询', '标贯查询', '重Ⅱ回次查询', '重Ⅱ查询', '最大孔深查询', '钻孔高程查询'];

const gridX = [169, 418, 667, 915, 1164];
const gridY = [236, 485, 734];
const topLabels = [['99', '900'], ['99', '950'], ['(405)00', '000'], ['00', '050'], ['00', '100']];
const sideLabels = [['-90', '000'], ['-90', '050'], ['-90', '100']];

const callouts = [
  { x: 102.5, y: 321.5, tip: [151.5, 446.5], lines: ['X=40499.896km', 'Y=-3690.042km'] },
  { x: 319.5, y: 195.5, tip: [274.5, 344.5], lines: ['X=40499.921km', 'Y=-3690.022km'] },
  { x: 597.5, y: 173.5, tip: [625.5, 312.5], lines: ['X=40499.992km', 'Y=-3690.015km'] },
  { x: 819.5, y: 245.5, tip: [958.5, 345.5], lines: ['X=40500.059km', 'Y=-3690.022km'] },
  { x: 1082.5, y: 184.5, tip: [1201.5, 296.5], lines: ['X=40500.107km', 'Y=-3690.012km'] },
];

const arrow = (x: number, y: number, [tx, ty]: number[]) => {
  const a = Math.atan2(y - ty, x - tx);
  const end = (t: number) => `${tx + 14 * Math.cos(a + t)} ${ty + 14 * Math.sin(a + t)}`;
  return `M${x} ${y}L${tx} ${ty}M${end(0.27)}L${tx} ${ty}L${end(-0.27)}`;
};

const TopRuler = () => (
  <div className="h-4 shrink-0 bg-linear-to-b from-[#777] via-[#fff] via-60% to-[#c4c4c4]">
    <svg className="block h-4 w-full overflow-visible font-['Liberation_Serif',serif] text-[12px]">
      <path d="M17.5 15.5h27q5-1 8-6t9-9" fill="none" stroke="#444" strokeWidth="1.5" />
      <path d="M1362.5 .5q6 1 8 7t9 8h34" fill="none" stroke="#444" strokeWidth="1.5" />
      <text x="2" y="12">km</text>
      <text x="25" y="12">404</text>
      <text x="1384" y="12">405</text>
      {gridX.map((x, i) => (
        <g key={x}>
          <path d={`M${x + 17.5} 1v15`} stroke="#000" />
          <text x={x + 15} y="12" textAnchor="end">{topLabels[i][0]}</text>
          <text x={x + 19} y="12">{topLabels[i][1]}</text>
        </g>
      ))}
    </svg>
  </div>
);

const SideRuler = () => (
  <div className="w-[17px] shrink-0 bg-linear-to-r from-[#777] via-[#fff] via-65% to-[#c4c4c4]">
    <svg className="block h-full w-[17px] font-['Liberation_Serif',serif] text-[12px]">
      <path d="M16 0v34q-1 4-6 6t-9 6M.5 762q1 5 7 7t8.5 8v40" fill="none" stroke="#444" strokeWidth="1.5" />
      <text transform="translate(12 26) rotate(-90)">-36</text>
      <text transform="translate(12 800) rotate(-90)">-36</text>
      {gridY.map((y, i) => (
        <g key={y}>
          <path d={`M0 ${y + 0.5}h17`} stroke="#000" />
          <text transform={`translate(12 ${y + 3}) rotate(-90)`} textAnchor="end">{sideLabels[i][0]}</text>
          <text transform={`translate(12 ${y - 2}) rotate(-90)`}>{sideLabels[i][1]}</text>
        </g>
      ))}
    </svg>
  </div>
);

const Plot = () => (
  <svg
    className="block h-full min-w-0 flex-1 bg-white font-['Liberation_Mono',monospace] text-[9px]"
    fill="none"
    stroke="#000"
    shapeRendering="crispEdges"
  >
    {gridX.map((x) => <path key={x} d={`M${x + 0.5} 0v811`} stroke="#bdbdbd" />)}
    {gridY.map((y) => <path key={y} d={`M0 ${y + 0.5}h1396`} stroke="#bdbdbd" />)}
    <path d="M1384.5 0v811" />
    <path d="M1380.5 807.5h8v4h-8z" />
    <polyline points="151.5,446.5 274.5,344.5 368.5,425.5 625.5,312.5 777.5,423.5 958.5,345.5 1055.5,433.5 1201.5,296.5" />
    {callouts.map((item) => (
      <g key={item.x}>
        <path d={`M${item.x} ${item.y}h78v37h-78zM${item.x} ${item.y + 20}h78`} />
        <path d={arrow(item.x, item.y + 37, item.tip)} />
        <text x={item.x + 8} y={item.y + 12} fill="#000" stroke="none">{item.lines[0]}</text>
        <text x={item.x + 8} y={item.y + 29} fill="#000" stroke="none">{item.lines[1]}</text>
      </g>
    ))}
  </svg>
);

const docTabs = [
  { icon: 'tHome', label: 'YTLWorld起始页' },
  { icon: 'tGlobe', label: '空间图形编辑', active: true },
  { icon: 'tEdit', label: '标注样式编辑' },
];

const DocTabs = () => (
  <div className="flex h-6 shrink-0 items-stretch border-b-2 border-[#f0f0f0] bg-[#9b9d9c] pl-1">
    {docTabs.map((t) => (
      <div key={t.label} className={clsx('flex items-center gap-1 pr-1.5 pl-2', t.active ? 'bg-white text-[#0000f0]' : 'text-black')}>
        <button type="button" className="flex items-center gap-1 whitespace-nowrap">
          <Glyph name={t.icon} />
          {t.label}
        </button>
        <button type="button" aria-label="close" className="p-0.5">
          <svg viewBox="0 0 9 9" className="h-[9px] w-[9px]" stroke="#000" strokeWidth="1.8"><path d="M1 1l7 7M8 1l-7 7" /></svg>
        </button>
      </div>
    ))}
    <span className="flex-1" />
    <svg viewBox="0 0 42 9" className="mr-1 h-[9px] w-[42px] self-center" fill="#808382">
      <path d="M0 0h1v9h-1zM7 0v9l-5-4.5zM18 0v9l-5-4.5zM25 0v9l5-4.5zM36 0v9l5-4.5zM41 0h1v9h-1z" />
    </svg>
  </div>
);

const Bar = () => <span className="h-4 w-px shrink-0 bg-black" />;

const Field = ({ label, value, width }: { label: string; value: string; width: string }) => (
  <label className="flex items-center gap-1">
    {label}
    <input type="text" defaultValue={value} className={clsx('h-[17px] bg-white px-0.5 text-[11px]', width)} />
  </label>
);

const radio = 'h-[11px] w-[11px] appearance-none rounded-full border-2 border-[#e8e8e8] bg-[#d0d0d0] checked:bg-[#10506e]';

const StatusBar = () => (
  <div className="flex h-[23px] shrink-0 items-center gap-[10px] overflow-hidden bg-[#9d9d9d] whitespace-nowrap">
    <strong className="-ml-[11px] text-[13px]">选择图元：</strong>
    <span>鼠标操作&gt;&gt;</span>
    <label className="-ml-1 flex items-center gap-1"><input type="radio" name="mode" defaultChecked className={radio} />增加选择</label>
    <label className="ml-1 flex items-center gap-1"><input type="radio" name="mode" className={radio} />剔除选择</label>
    <Bar />
    <a href="#filter" className="text-[#0000e8] underline">条件选择</a>
    <Bar />
    <a href="#props" className="text-[#0000e8] underline">属性显示</a>
    <Bar />
    <label className="ml-1 flex items-center gap-1"><input type="checkbox" className="h-3 w-3 appearance-none border border-[#bbb] bg-[#f2f2f2]" />可选择只读图元</label>
    <Bar />
    <span className="mr-1">图形窗口中心(km)&gt;&gt;</span>
    <Field label="水平" value="40500.006" width="w-[77px]" />
    <Field label="垂直" value="-3690.034" width="w-[72px]" />
    <Bar />
    <Field label="显示比例尺" value="760.100" width="w-[62px]" />
  </div>
);

export default function App() {
  return (
    <div className='flex h-screen flex-col overflow-hidden bg-white font-["Open_Sans","Noto_Sans_CJK_SC",sans-serif] text-[12px] leading-4 text-black'>
      <div className="h-1 shrink-0 bg-[#9b9b9b]" />
      <nav className="flex h-[23px] shrink-0 items-center gap-[15px] bg-[#505050] pl-[5px] whitespace-nowrap text-white">
        {menus.map((m) => <button key={m} type="button">{m}</button>)}
      </nav>

      <div className="flex shrink-0 flex-col gap-px overflow-hidden bg-[#5d6066] pb-px">
        <div className="-ml-0.5 flex">
          <ToolGroup grip={false} items={['newDoc', 'open', 'save', '|', 'cut', 'copy', 'paste', 'undo', 'redo', '|', 'find', 'print', 'help', 'whats']} />
          <ToolGroup items={['colBrush', 'circBrush', 'colText', 'colCirc', 'circCol']} />
          <ToolGroup items={['curveAdd', 'curveRed', 'curvePen', 'curveDash', 'curveWin', 'curveWin2', 'curveBand', 'bandCurve']} />
          <ToolGroup items={['winDot', 'winDots', 'winRect', 'winPara', 'winPoly', 'winCurve', 'winStamp', 'winBand', 'winBand2']} />
          <ToolGroup items={['sheetPen', 'sheetGem', 'sheetAdd']} />
          <FormatGroup />
          <ToolGroup items={['snapLine', 'snapCurve', 'snapMid', 'snapCross', 'snapCircle', 'snapPerp', 'snapShape', 'snapNear', 'snapGrid']} />
        </div>
        <div className="-ml-0.5 flex">
          <ToolGroup grip={false} items={['infoBlue', 'infoRed']} />
          <ToolGroup items={['hand', 'zRect', 'zIn', 'zOut', 'zAll', 'zScale', 'zPrev', 'zNext', 'zA', 'zPage', 'zPan', 'tiles', 'tileNext']} />
          <ToolGroup items={['calc', 'erase', 'cross', 'move', 'rotate', 'scale', 'skew', 'copyCirc', 'copySq', 'array', 'align1', 'align2', 'align3', 'grid', 'mirror']} />
          <ToolGroup items={['pline', 'rect', 'para', 'circ', 'circ3', 'ellipse', 'arc', 'spiral']} />
          <ToolGroup items={['stamp', 'penCurve', 'node', 'nodes', 'nodeBlue', 'chamfer', 'fillet', 'extend', 'trim', 'region']} />
          <ToolGroup items={['rb1', 'rb2', 'rb3']} />
          <ToolGroup items={['or1', 'or2', 'or3', 'or4', 'bub1', 'bub2', 'bub4', 'bub5', 'wand']} />
          <ToolGroup items={['ht1', 'ht2', 'ht3', 'prism', 'v1', 'v2', 'v3', 'v4', 'split', 'quad', 'blocks']} />
          <ToolGroup>
            <button type="button" className={bigA}>A<span className="text-[14px] font-normal">I</span></button>
            <Tool name="docText" />
            <button type="button" className={clsx(bigA, 'underline decoration-[#b01018] decoration-1')}>A<span className="text-[14px] font-normal">I</span></button>
          </ToolGroup>
          <ToolGroup>
            <button type="button" className={clsx(bigA, 'italic')}>A</button>
          </ToolGroup>
        </div>
      </div>

      <div className="flex min-h-0 flex-1 bg-[#505050]">
        <aside className="flex w-[253px] shrink-0 overflow-hidden">
          <div className="-ml-3 flex w-[265px] shrink-0 flex-col">
            <Panel
              title="线图例"
              grow="flex-[453]"
              tabs={[{ icon: 'tPoint', label: '点图例' }, { icon: 'tLine', label: '线图例', active: true }, { icon: 'tPattern', label: '花纹图例' }]}
            >
              <div className="pt-0.5">
                <Branch className="h-16" />
                <RootRow />
                <ChildRow icon="lineDoc" label="实线" bold leaf sample={<span className="ml-1 h-px w-[50px] bg-black" />} />
                <ChildRow icon="folder" label="通用" />
                <ChildRow icon="folder" label="工程" />
              </div>
            </Panel>
            <Panel
              title="标注样式"
              grow="flex-[403]"
              tabs={[{ icon: 'tMark', label: '标注样式', active: true }, { icon: 'tFont', label: '字体图例' }, { icon: 'tColor', label: '颜色图例' }]}
            >
              <div className="pt-0.5">
                <Branch className="h-10" />
                <RootRow />
                <ChildRow icon="markDoc" label="新标注样式" leaf sample={<span className="ml-1.5 w-[27px] text-[7px] leading-3">标注文字</span>} />
                <ChildRow
                  icon="markDoc"
                  label="新标注11"
                  bold
                  leaf
                  sample={(
                    <svg viewBox="0 0 27 20" className="ml-1.5 h-5 w-[27px] shrink-0" fill="none" stroke="#000">
                      <path d="M8.5 2.5h17v7h-17zM8 6.5h18" />
                      <path d="M12.5 7v6M10 11.5h5M21.5 0v4M19 2.5h5" stroke="#e01010" />
                      <path d="M1 17.5l1-1M.5 19.5l2-2" />
                    </svg>
                  )}
                />
              </div>
            </Panel>
          </div>
        </aside>

        <main className="ml-1.5 flex min-w-0 flex-1 flex-col border-r-2 border-white">
          <TopRuler />
          <div className="flex min-h-0 flex-1 border-b border-black">
            <SideRuler />
            <Plot />
          </div>
          <DocTabs />
          <div className="h-1 shrink-0 bg-[#505050]" />
        </main>

        <aside className="ml-[5px] flex w-[173px] shrink-0 overflow-hidden">
          <div className="flex w-[265px] shrink-0 flex-col">
            <Panel
              title="布局"
              grow="flex-[230]"
              scroll="w-[182px]"
              tabs={[{ icon: 'tGlobe', label: '空间图形' }, { icon: 'tImage', label: '布局', active: true }]}
            >
              <div className="pt-0.5">
                <Branch className="h-10" />
                <RootRow states />
                <ChildRow icon="layout" label="地质矿产布局" bold current states="on" />
                <ChildRow icon="layout" label="A3工勘布局" states="off" />
              </div>
            </Panel>
            <Panel
              title="柱状图"
              grow="flex-[398]"
              scroll="w-[182px]"
              tabs={[{ icon: 'tBars', label: '柱状图', active: true }, { icon: 'tArea', label: '剖面图' }]}
            >
              <div className="pt-0.5">
                <Branch className="h-4" />
                <RootRow states />
                <ChildRow icon="chartDoc" label="A3工勘柱状" bold current states="on" />
              </div>
            </Panel>
            <Panel
              title="查询表"
              grow="flex-[228]"
              scroll="w-[150px]"
              tabs={[{ icon: 'tTable', label: '属性表' }, { icon: 'tQuery', label: '查询表', active: true }, { icon: 'tReport', label: 'GIS报告' }]}
            >
              <ul className="-mt-0.5 ml-[54px] border-l border-dotted border-[#808080]">
                {queries.map((q) => (
                  <li key={q} className={clsx('flex h-6 items-center whitespace-nowrap', q === '重Ⅱ查询' && 'text-[13px] font-bold')}>
                    <Guide className="mr-px w-[10px]" />
                    <Glyph name="eye" />
                    <svg viewBox="0 0 25 16" className="mr-1 ml-[7px] h-4 w-[25px] shrink-0" fill="none" stroke="#666">
                      <path d="M6.5 0v16M12.5 0v16M18.5 0v16M0 5.5h25M0 10.5h25" />
                      <path d="M.5 .5h24v15h-24z" stroke="#000" />
                    </svg>
                    {q}
                  </li>
                ))}
              </ul>
            </Panel>
          </div>
        </aside>
      </div>

      <StatusBar />
      <p className="shrink-0 overflow-hidden pt-[14px] pb-[9px] whitespace-nowrap">
        <strong className="-ml-1.5 text-[13px]">当前选择：</strong>
        当前未选定图元，点击鼠标选择图元，如第一次点击未选中，则第二次点击开窗口选择，向左窗口为交叉选择，向右窗口为包含选择，如按下SHIFT键则为开窗口选择，按下CTRL键为循环单选
      </p>
    </div>
  );
}
